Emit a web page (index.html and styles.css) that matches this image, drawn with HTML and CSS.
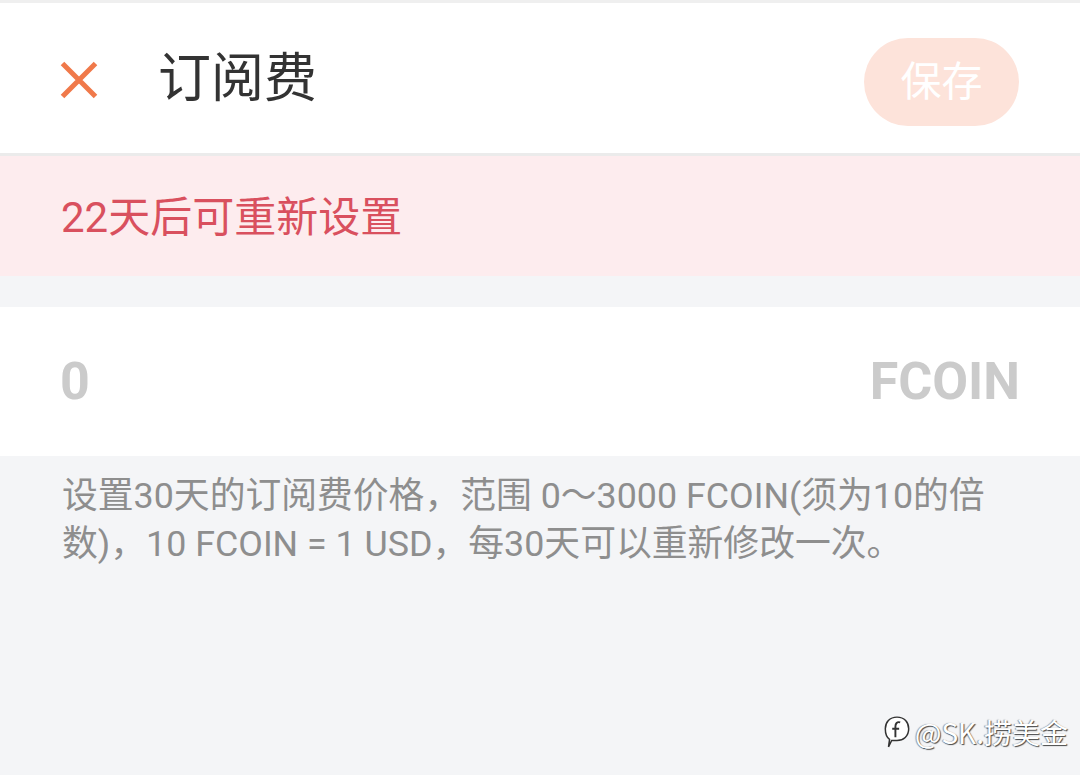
FILE: index.html
```html
<!DOCTYPE html>
<html lang="zh">
<head>
<meta charset="utf-8">
<link rel="stylesheet" href="styles.css">
</head>
<body>
<div class="page">
  <header class="topbar">
    <svg class="close" width="38" height="38" viewBox="0 0 38 38">
      <path d="M2.5 2.5 L35.5 35.5 M35.5 2.5 L2.5 35.5" stroke="#f0794a" stroke-width="5" stroke-linecap="butt" fill="none"/>
    </svg>
    <h1 class="title">订阅费</h1>
    <button class="save">保存</button>
  </header>
  <div class="notice">22天后可重新设置</div>
  <div class="spacer"></div>
  <div class="field">
    <span class="amount">0</span>
    <span class="unit">FCOIN</span>
  </div>
  <p class="desc">设置30天的订阅费价格，范围 0～3000 FCOIN(须为10的倍数)，10 FCOIN = 1 USD，每30天可以重新修改一次。</p>
  <div class="watermark">
    <svg class="wm-icon" width="28" height="34" viewBox="0 0 26 32">
      <path d="M13 2 C20 2 24 7 24 13 C24 20 19 24 13 24 L8 24 L5 30 L6 23 C3 21 2 17 2 13 C2 7 6 2 13 2 Z" fill="#fff" stroke="#333" stroke-width="1.4"/>
      <path d="M16 7 C13 6 11.5 8 11.5 11 L11.5 21 M8.5 13 L15 13" stroke="#333" stroke-width="1.8" fill="none"/>
    </svg>
    <span class="wm-text">@SK.捞美金</span>
  </div>
</div>
</body>
</html>
```

FILE: styles.css
```css
html, body {
  margin: 0;
  padding: 0;
}
body {
  background: #f4f5f7;
  font-family: Roboto, "Noto Sans CJK SC", sans-serif;
  width: 1080px;
  height: 775px;
  overflow: hidden;
}
.page {
  position: relative;
  height: 775px;
  border-top: 3px solid #efefef;
  box-sizing: border-box;
}
.topbar {
  display: flex;
  align-items: center;
  height: 150px;
  padding: 0 61px 0 60px;
  background: #fff;
  border-bottom: 3px solid #ebebeb;
}
.close {
  display: block;
  margin-top: 4px;
}
.title {
  margin: 0 0 0 60px;
  font-weight: normal;
  font-size: 53px;
  color: #333;
  font-family: "Noto Sans CJK SC", sans-serif;
  line-height: 1;
  margin-top: -8px;
}
.save {
  margin-left: auto;
  width: 155px;
  height: 88px;
  border: none;
  border-radius: 44px;
  background: #fde3da;
  color: #fff;
  font-size: 41px;
  font-family: "Noto Sans CJK SC", sans-serif;
  padding: 0 0 8px 0;
  margin-top: 8px;
}
.notice {
  height: 120px;
  display: flex;
  align-items: center;
  padding-left: 61px;
  padding-bottom: 6px;
  box-sizing: border-box;
  background: #fdecee;
  color: #d9505e;
  font-size: 42px;
}
.spacer {
  height: 31px;
}
.field {
  display: flex;
  align-items: center;
  justify-content: space-between;
  height: 149px;
  padding: 0 60px 0 60px;
  background: #fff;
  color: #cbcbcb;
  font-weight: bold;
  font-size: 52px;
}
.desc {
  margin: 0;
  padding: 16px 62px 0 62px;
  color: #8e8e8e;
  font-size: 35.8px;
  line-height: 48px;
}
.watermark {
  position: absolute;
  right: 12px;
  top: 709px;
  display: flex;
  align-items: center;
  gap: 4px;
}
.wm-text {
  font-size: 28px;
  color: #fff;
  font-family: "Noto Sans CJK SC", sans-serif;
  text-shadow: 1px 1px 1px rgba(0,0,0,0.7), -1px 0 1px rgba(0,0,0,0.4);
}
```
